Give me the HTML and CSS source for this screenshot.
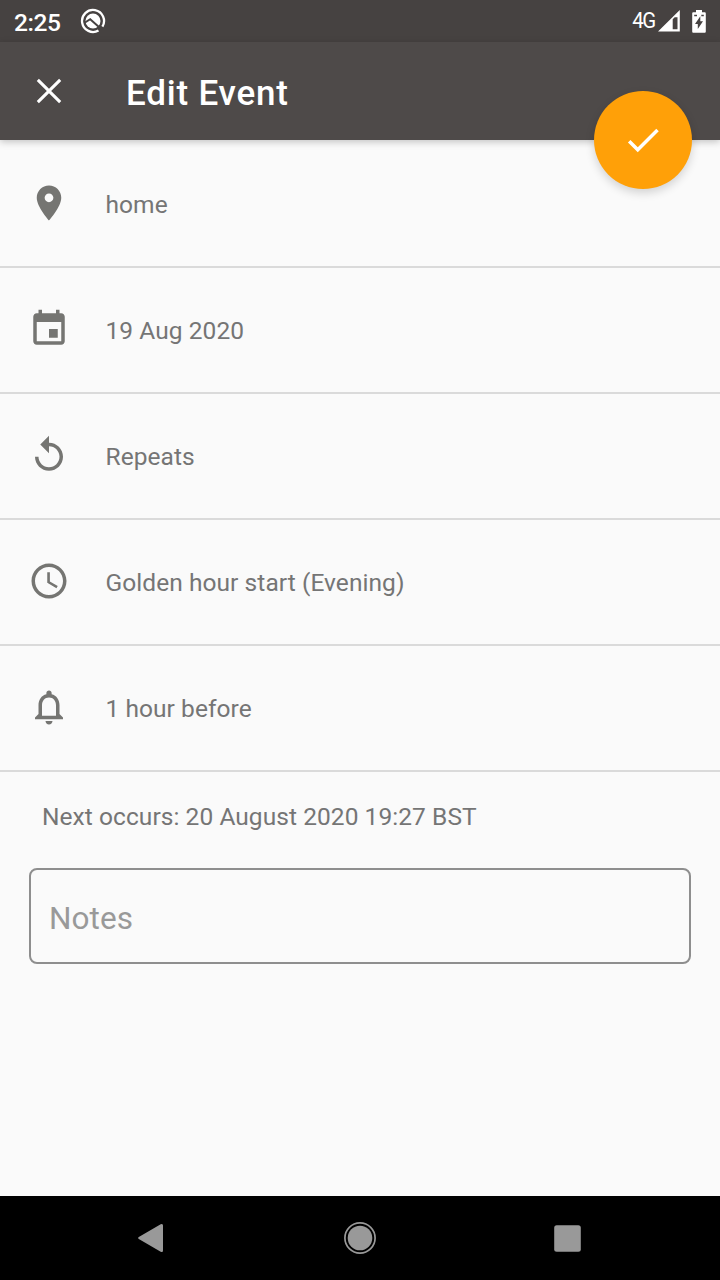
FILE: index.html
```html
<!DOCTYPE html>
<html lang="en">
<head>
<meta charset="utf-8">
<title>Edit Event</title>
<link rel="stylesheet" href="styles.css">
</head>
<body>
<div class="screen">
  <div class="status">
    <span class="clock">2:25</span>
    <svg class="q-icon" width="26" height="26" viewBox="0 0 26 26">
      <circle cx="13" cy="13" r="7.500" fill="#fff"/>
      <path d="M5 14.500l5.200-3.300L19.500 19.500" fill="none" stroke="#464241" stroke-width="2"/>
      <path d="M18.500 22.500A11 11 0 1 1 22.400 18.700" fill="none" stroke="#fff" stroke-width="2.300"/>
    </svg>
    <span class="network">4G</span>
    <svg class="signal" width="22" height="22" viewBox="0 0 22 22">
      <path fill="#fff" fill-rule="evenodd" d="M0 21.500L21.800 0v21.500zM14.700 9.200v10h4.800V7.200h-2.800z"/>
    </svg>
    <svg class="battery" width="14" height="23" viewBox="0 0 14 23">
      <path fill="#fff" d="M4 0h6v2.300h2.500c.8 0 1.300.5 1.300 1.300v17.800c0 .8-.5 1.300-1.300 1.300h-11c-.8 0-1.300-.5-1.300-1.300V3.600c0-.8.500-1.300 1.300-1.300H4z"/>
      <path fill="#464241" d="M8.300 6.200v5H11L5.800 19v-5H3z"/>
      <path fill="#464241" d="M2.200 4.800H5v1.400H2.200zM9.300 4.800h2.500v1.400H9.300z"/>
    </svg>
  </div>

  <header class="appbar">
    <svg class="icon close" viewBox="0 0 24 24"><path d="M19 6.230L17.770 5 12 10.770 6.230 5 5 6.230 10.770 12 5 17.770 6.230 19 12 13.230 17.770 19 19 17.770 13.230 12z"/></svg>
    <h1 class="title">Edit Event</h1>
    <div class="fab">
      <svg class="icon" viewBox="0 0 24 24"><path d="M9 16.170L4.830 12l-1.420 1.410L9 19 21 7l-1.410-1.410z"/></svg>
    </div>
  </header>

  <main class="content">
    <div class="row">
      <svg class="icon" viewBox="0 0 24 24"><path d="M12 2C8.130 2 5 5.130 5 9c0 5.250 7 13 7 13s7-7.750 7-13c0-3.870-3.130-7-7-7zm0 9.500c-1.380 0-2.500-1.120-2.500-2.500s1.120-2.500 2.500-2.500 2.500 1.120 2.500 2.500-1.120 2.500-2.500 2.500z"/></svg>
      <span>home</span>
    </div>
    <div class="row">
      <svg class="icon" viewBox="0 0 24 24"><path d="M17 12h-5v5h5v-5zM16 1v2H8V1H6v2H5c-1.110 0-1.990.9-1.990 2L3 19c0 1.100.89 2 2 2h14c1.100 0 2-.9 2-2V5c0-1.100-.9-2-2-2h-1V1h-2zm3 18H5V8h14v11z"/></svg>
      <span>19 Aug 2020</span>
    </div>
    <div class="row">
      <svg class="icon" viewBox="0 0 24 24"><path d="M12 5V1L7 6l5 5V7c3.310 0 6 2.690 6 6s-2.690 6-6 6-6-2.690-6-6H4c0 4.420 3.580 8 8 8s8-3.580 8-8-3.580-8-8-8z"/></svg>
      <span>Repeats</span>
    </div>
    <div class="row">
      <svg class="icon" viewBox="0 0 24 24"><path d="M11.990 2C6.470 2 2 6.480 2 12s4.470 10 9.990 10C17.520 22 22 17.520 22 12S17.520 2 11.990 2zM12 20c-4.420 0-8-3.580-8-8s3.580-8 8-8 8 3.580 8 8-3.580 8-8 8zm.5-13H11v6l5.250 3.150.75-1.230-4.500-2.670z"/></svg>
      <span>Golden hour start (Evening)</span>
    </div>
    <div class="row">
      <svg class="icon" viewBox="0 0 24 24"><path d="M12 22c1.100 0 2-.9 2-2h-4c0 1.100.89 2 2 2zm6-6v-5c0-3.070-1.640-5.640-4.500-6.320V4c0-.83-.67-1.500-1.500-1.500s-1.500.67-1.500 1.500v.68C7.630 5.360 6 7.920 6 11v5l-2 2v1h16v-1l-2-2zm-2 1H8v-6c0-2.480 1.510-4.500 4-4.500s4 2.020 4 4.500v6z"/></svg>
      <span>1 hour before</span>
    </div>
    <p class="next">Next occurs: 20 August 2020 19:27 BST</p>
    <div class="notes">Notes</div>
  </main>

  <nav class="navbar">
    <svg width="26" height="30" viewBox="0 0 26 30"><path fill="#999" d="M.8 14.100L22.700 1.200q2.300-1 2.300 1.200v25.200q0 2.200-2.300 1.200L.8 15.900q-1.300-.9 0-1.800z"/></svg>
    <svg class="home" width="32" height="32" viewBox="0 0 32 32"><circle cx="16" cy="16" r="15.100" fill="none" stroke="#999" stroke-width="1.700"/><circle cx="16" cy="16" r="12.300" fill="#999"/></svg>
    <svg width="27" height="27" viewBox="0 0 27 27"><rect x=".2" y=".2" width="26.600" height="26.600" rx="2.500" fill="#999"/></svg>
  </nav>
</div>
</body>
</html>
```

FILE: styles.css
```css
* {
  box-sizing: border-box;
}

body {
  margin: 0;
  font-family: Roboto, "Noto Sans", sans-serif;
}

svg {
  display: block;
  flex: none;
}

.screen {
  width: 720px;
  height: 1280px;
  display: flex;
  flex-direction: column;
  background: #fafafa;
  overflow: hidden;
}

.status {
  height: 42px;
  flex: none;
  display: flex;
  align-items: center;
  padding: 0 14px;
  background: #464241;
  color: #fff;
}

.clock {
  width: 66px;
  padding-top: 3px;
  font-size: 24.5px;
  line-height: 28px;
  font-weight: 500;
  letter-spacing: -0.4px;
}

.network {
  margin-left: auto;
  margin-right: 3px;
  font-size: 21.5px;
  line-height: 28px;
  letter-spacing: -1.5px;
  transform: scaleX(0.95);
  transform-origin: right;
}

.battery {
  margin-left: 12px;
}

.appbar {
  position: relative;
  z-index: 1;
  height: 98px;
  flex: none;
  display: flex;
  align-items: center;
  padding: 0 28px;
  background: #4e4a49;
  color: #fff;
  box-shadow: 0 2px 7px rgba(0, 0, 0, 0.22);
}

.icon {
  width: 42px;
  height: 42px;
  fill: currentColor;
}

.title {
  margin: 5px 0 0 56px;
  font-size: 35px;
  line-height: 42px;
  font-weight: 500;
  letter-spacing: 0.8px;
}

.fab {
  position: absolute;
  right: 28px;
  bottom: -49px;
  width: 98px;
  height: 98px;
  display: flex;
  align-items: center;
  justify-content: center;
  border-radius: 50%;
  background: #ffa008;
  box-shadow: 0 4px 10px rgba(0, 0, 0, 0.16);
}

.content {
  flex: 1;
  color: #757575;
  font-size: 24.5px;
  letter-spacing: 0.06px;
}

.row {
  height: 126px;
  display: flex;
  align-items: center;
  gap: 35.5px;
  padding: 0 28px;
}

.row .icon {
  color: #757572;
}

.row span {
  padding-top: 3px;
  line-height: 30px;
}

.row + .row,
.next {
  border-top: 2px solid #dadada;
}

.row + .row {
  padding-bottom: 2px;
}

.next {
  margin: 0;
  padding: 30px 42px 0;
  height: 98px;
  line-height: 30px;
}

.notes {
  height: 96px;
  margin: 0 29px;
  display: flex;
  align-items: center;
  padding: 4px 0 0 18px;
  border: 2px solid #8e8e8e;
  border-radius: 8px;
  color: #999;
  font-size: 31.5px;
}

.navbar {
  height: 84px;
  flex: none;
  display: flex;
  align-items: center;
  justify-content: space-between;
  padding: 0 139px 0 138px;
  background: #000;
}

.home {
  margin-left: 2px;
}
```
